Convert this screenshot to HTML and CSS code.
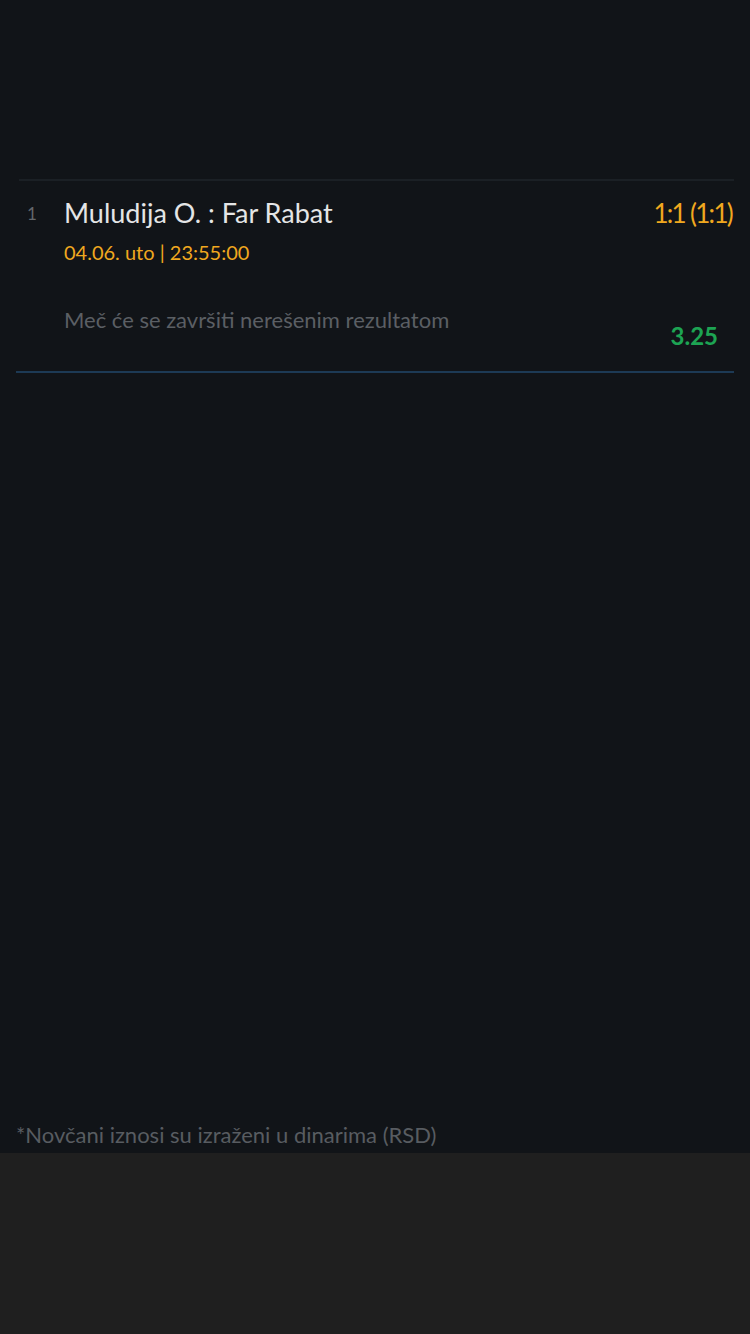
FILE: index.html
```html
<!doctype html>
<html>
<head>
    <meta charset="utf-8">
    <title>Tiket</title>
    <link rel="stylesheet" href="styles.css">
</head>
<body>

<div class="screen">
    <div class="ticket">
        <div class="pair">
            <div class="pair_num">1</div>
            <div class="pair_body">
                <div class="pair_head">
                    <div class="pair_title">Muludija O. : Far Rabat</div>
                    <div class="pair_score">1:1 (1:1)</div>
                </div>
                <div class="pair_date">04.06. uto | 23:55:00</div>
                <div class="pair_tip">
                    <div class="pair_desc">Meč će se završiti nerešenim rezultatom</div>
                    <div class="pair_odd">3.25</div>
                </div>
            </div>
        </div>
    </div>
    <div class="note">*Novčani iznosi su izraženi u dinarima (RSD)</div>
</div>
<div class="bottom_bar"></div>

</body>
</html>
```

FILE: styles.css
```css
body {
    background: #111418;
    margin: 0;
    font-family: Lato, "Open Sans", sans-serif;
}

.screen {
    height: 1153px;
    display: flex;
    flex-direction: column;
    justify-content: space-between;
    padding-top: 179px;
    box-sizing: border-box;
}

.ticket {
    margin: 0 16px;
    border-bottom: 2px solid #1d3a55;
}

.pair {
    display: flex;
    border-top: 2px solid #1b2025;
    margin-left: 3px;
    padding-bottom: 21px;
}

.pair_num {
    width: 45px;
    color: #63676c;
    font-size: 17px;
    padding-top: 22px;
    padding-left: 8px;
    box-sizing: border-box;
}

.pair_body {
    flex: 1;
    padding-top: 15px;
}

.pair_head {
    display: flex;
    justify-content: space-between;
    align-items: baseline;
}

.pair_title {
    color: #e4e5e6;
    font-size: 27px;
}

.pair_score {
    color: #f0a81f;
    font-size: 26px;
    letter-spacing: -1.7px;
    padding-right: 2px;
}

.pair_date {
    color: #f0a81f;
    font-size: 20px;
    margin-top: 11px;
}

.pair_tip {
    display: flex;
    justify-content: space-between;
    margin-top: 42px;
}

.pair_desc {
    color: #5b5f64;
    font-size: 22px;
}

.pair_odd {
    color: #1da453;
    font-size: 24px;
    font-weight: bold;
    margin-top: 15px;
    margin-right: 16px;
}

.note {
    color: #585c61;
    font-size: 22px;
    padding: 0 16px 5px;
}

.bottom_bar {
    height: 181px;
    background: #1f1f1f;
}
```
